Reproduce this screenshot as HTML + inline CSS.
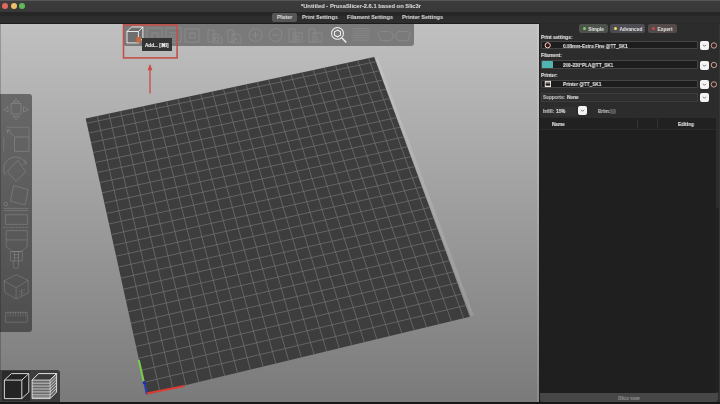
<!DOCTYPE html>
<html><head><meta charset="utf-8">
<style>
*{margin:0;padding:0;box-sizing:border-box}
html,body{width:720px;height:404px;overflow:hidden;background:#2b2b2b;font-family:"Liberation Sans",sans-serif}
.a{position:absolute}
#title{left:0;top:0;width:720px;height:12px;background:linear-gradient(#565656 0,#565656 1px,#3c3c3c 1px,#383838 12px)}
.tl{position:absolute;top:3.4px;width:5.8px;height:5.8px;border-radius:50%}
#ttxt{left:0.5px;top:3.4px;width:720px;text-align:center;font-size:5.8px;line-height:7px;font-weight:bold;color:#d4d4d4;white-space:nowrap;will-change:transform;-webkit-text-stroke:0.1px currentColor}
#tabs{left:0;top:12px;width:720px;height:12px;background:linear-gradient(#262626 0,#262626 4.5px,#2d2d2d 4.5px,#2d2d2d 10.8px,#2a2a2a 10.8px)}
.tab{position:absolute;top:1.4px;height:8.6px;font-size:6.1px;font-weight:bold;color:#d6d6d6;line-height:8.6px;white-space:nowrap;transform:scaleX(0.905);transform-origin:0 50%;will-change:transform;-webkit-text-stroke:0.1px currentColor}
#view{left:0;top:24px;width:539px;height:380px;background:linear-gradient(#c0c0c0,#7a7a7a 378px);overflow:hidden}
#panel{left:539px;top:24px;width:181px;height:380px;background:#2c2c2c}
.lbl{position:absolute;font-size:5.2px;font-weight:bold;color:#dcdcdc;white-space:nowrap;line-height:7px;transform:scaleX(0.9);transform-origin:0 50%;will-change:transform;-webkit-text-stroke:0.15px currentColor}
.combo{position:absolute;background:#1d1d1d;border:0.8px solid #454545;border-radius:1px}
.dd{position:absolute;width:9px;height:8.6px;background:#f4f4f4;border-radius:2px}
.dd svg{position:absolute;left:0;top:0}
.mode{position:absolute;top:24.3px;height:8.7px;border-radius:2.5px;font-size:4.8px;font-weight:bold;color:#d4d4d4;line-height:12.3px;white-space:nowrap;will-change:transform;-webkit-text-stroke:0.12px currentColor}
.mode i{position:absolute;top:2.9px;width:3px;height:3px;border-radius:50%}
</style></head><body>
<div class="a" id="title">
  <div class="tl" style="left:1.9px;background:#e3675f"></div>
  <div class="tl" style="left:10.8px;background:#ecc166"></div>
  <div class="tl" style="left:19.4px;background:#5dbb57"></div>
</div>
<div class="a" id="ttxt">*Untitled - PrusaSlicer-2.6.1 based on Slic3r</div>
<div class="a" id="tabs">
  <div class="a" style="left:272.2px;top:1.3px;width:24.6px;height:8.6px;background:#565656;border-radius:2px"></div>
  <div class="tab" style="left:277px">Plater</div>
  <div class="tab" style="left:301.6px">Print Settings</div>
  <div class="tab" style="left:346.5px">Filament Settings</div>
  <div class="tab" style="left:401.5px">Printer Settings</div>
</div>

<div class="a" style="left:0;top:22.7px;width:539px;height:1.4px;background:#1c1c1c"></div>
<div class="a" id="view">
<svg width="539" height="380" viewBox="0 24 539 380" style="position:absolute;left:0;top:0">
  <path d="M376.5 58.5L472.5 316" stroke="rgba(255,255,255,0.13)" stroke-width="3" fill="none"/>
  <polygon points="85.7,118.5 374.2,57.1 469.8,316.8 146.7,394.5" fill="#3d3d3d"/>
  <path d="M159.8 391.4L97.3 116.0M144.0 382.3L465.6 305.4M172.8 388.2L108.9 113.6M141.3 370.3L461.4 294.1M185.8 385.1L120.5 111.1M138.7 358.3L457.3 282.9M198.7 382.0L132.0 108.6M136.1 346.5L453.2 271.8M211.7 378.9L143.5 106.2M133.5 334.8L449.2 260.8M224.6 375.8L155.0 103.7M131.0 323.3L445.2 250.0M237.4 372.7L166.5 101.3M128.4 311.8L441.2 239.2M250.3 369.6L177.9 98.9M125.9 300.5L437.3 228.5M263.1 366.5L189.4 96.4M123.4 289.2L433.4 218.0M275.8 363.4L200.8 94.0M121.0 278.1L429.6 207.5M288.6 360.4L212.1 91.6M118.5 267.1L425.7 197.1M301.3 357.3L223.5 89.2M116.1 256.2L422.0 186.9M314.0 354.3L234.8 86.8M113.7 245.4L418.2 176.7M326.6 351.2L246.1 84.4M111.4 234.6L414.5 166.6M339.2 348.2L257.3 82.0M109.0 224.0L410.8 156.6M351.8 345.2L268.6 79.6M106.7 213.5L407.2 146.7M364.3 342.2L279.8 77.2M104.4 203.1L403.6 136.9M376.9 339.1L291.0 74.8M102.1 192.8L400.0 127.2M389.4 336.1L302.2 72.4M99.9 182.6L396.5 117.6M401.8 333.1L313.3 70.1M97.6 172.5L393.0 108.1M414.2 330.2L324.4 67.7M95.4 162.5L389.5 98.6M426.6 327.2L335.5 65.3M93.2 152.5L386.0 89.2M439.0 324.2L346.6 63.0M91.1 142.7L382.6 80.0M451.3 321.2L357.7 60.6M88.9 133.0L379.2 70.8M463.7 318.3L368.7 58.3M86.8 123.3L375.9 61.6" stroke="#727272" stroke-width="0.72" fill="none"/>
  <line x1="143.9" y1="382.4" x2="138.8" y2="360" stroke="#74d048" stroke-width="2"/>
  <line x1="144.6" y1="382.8" x2="146.6" y2="394" stroke="#2a3cb8" stroke-width="2"/>
  <line x1="146.6" y1="393.4" x2="184.4" y2="385.9" stroke="#dc3c32" stroke-width="2"/>
  <circle cx="144.3" cy="382.8" r="1.7" fill="#1e30a8"/>
</svg>
</div>

<!-- top toolbar -->
<div class="a" style="left:123px;top:24px;width:291.4px;height:21.6px;background:#7a7a7a;border-radius:0 0 3px 3px"></div>
<svg class="a" style="left:0;top:0" width="720" height="404">
  <g fill="none" stroke="#8f8f8f" stroke-width="0.75">
    <!-- delete -->
    <rect x="147" y="28" width="15" height="14"/>
    <rect x="152" y="33" width="6" height="6"/>
    <!-- delete all -->
    <rect x="166" y="28" width="15" height="14"/>
    <path d="M169 33h9M169 36h9M169 39h9"/>
    <!-- arrange -->
    <rect x="185" y="29" width="14" height="13"/>
    <rect x="190" y="33" width="5" height="5"/>
    <!-- copy -->
    <path d="M208 30h6v12h-6z"/><path d="M213 34h5l4 4v5h-9z"/><circle cx="217" cy="39" r="2"/>
    <!-- paste -->
    <path d="M228 30h6v12h-6z"/><path d="M232 34h6l3 3v6h-9z"/><path d="M234 41l2-3 2 3"/>
    <!-- more -->
    <circle cx="255.5" cy="35" r="6.5"/><path d="M252 35h7M255.5 31.5v7"/>
    <!-- fewer -->
    <circle cx="275.5" cy="35" r="6.5"/><path d="M272 35h7"/>
    <!-- split objects -->
    <path d="M289 29h6v13h-6z"/><path d="M293 33h9v9h-9z"/><rect x="296" y="36" width="3" height="4"/>
    <!-- split parts -->
    <path d="M309 29h6v13h-6z"/><path d="M313 33h9v9h-9z"/><path d="M317 36v4h2"/>
    <!-- layers -->
    <path d="M352.5 28.6h17M352.5 30.9h17M352.5 33.2h17M352.5 35.5h17M352.5 37.8h17M352.5 40.1h17" stroke="#8c8c8c"/>
    <!-- undo -->
    <path d="M377.5 31.8l3.5 9h7.5a4.6 4.6 0 0 0 0-9.2h-8.5"/>
    <!-- redo -->
    <path d="M410.5 31.3l-2.5 9.5h-7.5a4.7 4.7 0 0 1 0-9.4h8"/>
  </g>
  <!-- search (active) -->
  <g fill="none" stroke="#f0f0f0" stroke-width="1.05">
    <circle cx="337.5" cy="33.4" r="5.9"/>
    <path d="M337.5 30l3 1.7v3.4l-3 1.7-3-1.7v-3.4z"/>
    <path d="M342 38.1l4.3 4.5" stroke-width="1.4"/>
  </g>
  <!-- add cube -->
  <g stroke="#f4f4f4" stroke-width="0.9" stroke-linejoin="round">
    <path d="M127 31.5l4.5-4.5h11.4v11.4l-4.5 4.5H127z" fill="#6e6e6e"/>
    <path d="M127 31.5h11.4v11.4M138.4 31.5l4.5-4.5" fill="none"/>
  </g>
  <rect x="136.3" y="37" width="4.6" height="5.6" fill="#c8683a"/>
  <!-- red frame -->
  <rect x="123.5" y="24.9" width="53.6" height="33" fill="none" stroke="#c4504a" stroke-width="1.6"/>
  <!-- arrow -->
  <path d="M150 69v24.4" stroke="#cc4a40" stroke-width="1.3"/>
  <path d="M147.6 70.2L150 63.8 152.4 70.2z" fill="#cc4a40"/>
</svg>
<div class="a" style="left:142.3px;top:38.4px;width:29.6px;height:13.4px;background:#343434;font-size:4.7px;font-weight:bold;color:#ededed;line-height:16.2px;padding-left:2.9px;white-space:nowrap;overflow:hidden;will-change:transform;-webkit-text-stroke:0.1px #eee">Add... [&#8984;I]</div>

<!-- left toolbar -->
<div class="a" style="left:0;top:93.6px;width:32.2px;height:238.4px;background:rgba(0,0,0,0.42);border-radius:0 3px 3px 0"></div>
<svg class="a" style="left:0;top:0" width="60" height="404">
  <g fill="none" stroke="rgba(255,255,255,0.2)" stroke-width="0.75" stroke-linejoin="round">
    <!-- move -->
    <rect x="11.1" y="103.5" width="9.9" height="10.5"/>
    <path d="M13 101.9l3.1-3 3.1 3zM13 116.3l3.1 3.4 3.1-3.4zM8 106.6l-4.2 2.8 4.2 2.7zM23.5 106.6l5.2 2.8-5.2 2.7z"/>
    <!-- scale -->
    <path d="M3.8 137v14.4M6.5 127.3h22.5v9.7" stroke="rgba(255,255,255,0.15)"/>
    <rect x="14.5" y="137" width="14.5" height="14.4"/>
    <path d="M7.5 130l6 6M7.5 130h3.5M7.5 130v3.5"/>
    <!-- rotate -->
    <path d="M5.5 175a11 11 0 0 1 20-12.5"/><path d="M24.5 159.5l2.2 4 -4 0.8"/>
    <path d="M17.7 160.3l8.1 11.3-9.7 9.7-8.8-9.7z"/>
    <!-- place on face -->
    <path d="M13.7 185.6l14.5 4.1-3.2 15.3-14.5-4z"/>
    <circle cx="5.8" cy="204.2" r="1.8"/>
    <path d="M4 208.4h24.2M4 210.6h24.2"/>
    <!-- cut -->
    <rect x="5.6" y="214.7" width="21.8" height="9.7"/>
    <path d="M3.2 227.5h25.8" stroke-dasharray="2.2 1"/>
    <!-- paint -->
    <path d="M6.2 230.6h21v16.1l-6.2 4.9h-8.6l-6.2-4.9z M6.2 239.9h21"/>
    <rect x="10.5" y="251.6" width="11.8" height="9.3"/>
    <path d="M13.5 254.7h6M13.5 257.8h6M14.5 251.6v9.3M18.5 251.6v9.3"/>
    <path d="M13.3 260.9v5a2.6 2.6 0 0 0 5.3 0v-5"/>
    <!-- measure cube -->
    <path d="M4 281l12.1-6.3 12.1 5.6v12.9l-12.1 5.7-11.3-6.5z M4 281l12.1 6.6 12.1-7.3 M16.1 287.6v11.3"/>
    <path d="M19 292l6-3M19 295l6-3M21.5 289v7" stroke-width="0.5"/>
    <!-- ruler -->
    <rect x="5.6" y="312.3" width="21.6" height="9.9"/>
    <path d="M8 312.3v4.2M10.5 312.3v4.2M13 312.3v4.2M15.5 312.3v4.2M18 312.3v4.2M20.5 312.3v4.2M23 312.3v4.2M25.5 312.3v4.2" stroke-width="0.6"/>
  </g>
</svg>

<div class="a" style="left:0;top:24px;width:1.1px;height:380px;background:rgba(0,0,0,0.2)"></div>
<!-- bottom-left view toolbar -->
<div class="a" style="left:0;top:369.8px;width:60px;height:34.2px;background:#3d3d3d;border-radius:0 3px 0 0"></div>
<div class="a" style="left:2.2px;top:370.9px;width:28.3px;height:30.4px;background:#2b2b2b"></div>
<svg class="a" style="left:0;top:0" width="60" height="404">
  <g stroke="#e8e8e8" stroke-width="0.9" stroke-linejoin="round">
    <path d="M4.4 380.1l7-6.5h17.4v18.5l-7 6.5H4.4z" fill="#242424"/>
    <path d="M4.4 380.1h17.4v18.5M21.8 380.1l7-6.5" fill="none"/>
    <path d="M32.1 380.1l6.5-6.5h18v18.5l-6.5 6.5h-18z" fill="#6a6a6a"/>
    <path d="M38.6 373.6h18l-6.5 6.5h-18z" fill="#3a3a3a"/>
    <path d="M32.1 383.2h18M32.1 386.1h18M32.1 389h18M32.1 391.9h18M32.1 394.8h18M32.1 397.2h18M50.1 380.1v18.5M50.1 380.1l6.5-6.5 M50.1 383.2l6.5-6.5M50.1 386.1l6.5-6.5M50.1 389l6.5-6.5M50.1 391.9l6.5-6.5M50.1 394.8l6.5-6.5" fill="none" stroke-width="0.7"/>
  </g>
</svg>

<!-- right panel -->
<div class="a" id="panel"></div>
<div class="a" style="left:713.5px;top:208px;width:5px;height:184px;background:#222"></div>
<div class="a" style="left:718.7px;top:24px;width:1.3px;height:378px;background:#353535"></div>
<div class="a" style="left:538.7px;top:24px;width:1.3px;height:380px;background:#1f1f1f"></div>
<div class="a" style="left:536.6px;top:24px;width:2.1px;height:378px;background:rgba(255,255,255,0.12)"></div>
<div class="mode" style="left:578.8px;width:29px;background:#4b534a;padding-left:9.2px">Simple<i style="left:4.2px;background:#86c868"></i></div>
<div class="mode" style="left:610.4px;width:35.2px;background:#4c4c52;padding-left:9.4px">Advanced<i style="left:4.2px;background:#e8e060"></i></div>
<div class="mode" style="left:648.3px;width:29.1px;background:#544a4a;padding-left:9.6px">Expert<i style="left:4.2px;background:#d04444"></i></div>

<div class="lbl" style="left:541px;top:33.5px">Print settings:</div>
<div class="combo" style="left:540.7px;top:40.6px;width:157.5px;height:8.7px"></div>
<div class="lbl" style="left:562.8px;top:42.8px">0.08mm-Extra Fine @TT_SK1</div>
<svg class="a" style="left:0;top:0" width="720" height="130">
  <circle cx="547.7" cy="45.3" r="2.6" fill="#3a1614" stroke="#f0d4cc" stroke-width="1"/>
  <circle cx="713.9" cy="45.5" r="2.7" fill="#3a2622" stroke="#ccb0a6" stroke-width="0.9"/>
  <circle cx="713.9" cy="65" r="2.7" fill="#3a2622" stroke="#ccb0a6" stroke-width="0.9"/>
  <circle cx="713.9" cy="84.4" r="2.7" fill="#3a2622" stroke="#ccb0a6" stroke-width="0.9"/>
</svg>
<div class="dd" style="left:699.6px;top:41.1px"><svg width="9" height="9"><path d="M3 3.8l1.5 1.5 1.5-1.5" fill="none" stroke="#555" stroke-width="0.8"/></svg></div>

<div class="lbl" style="left:541px;top:52.1px">Filament:</div>
<div class="combo" style="left:540.7px;top:60.4px;width:157.5px;height:8.7px"></div>
<div class="a" style="left:542.4px;top:60.9px;width:10.9px;height:7.4px;background:#52b4b2;border-radius:0.5px"></div>
<div class="lbl" style="left:562.8px;top:61.9px">200-230°PLA@TT_SK1</div>
<div class="dd" style="left:699.6px;top:61px"><svg width="9" height="9"><path d="M3 3.8l1.5 1.5 1.5-1.5" fill="none" stroke="#555" stroke-width="0.8"/></svg></div>

<div class="lbl" style="left:541px;top:72.0px">Printer:</div>
<div class="combo" style="left:540.7px;top:79.8px;width:157.5px;height:8.7px"></div>
<svg class="a" style="left:0;top:0" width="560" height="92"><rect x="544.8" y="80.9" width="6.2" height="6.2" fill="#ece6dc"/><rect x="545.7" y="81.8" width="4.4" height="1.6" fill="#8e867c"/><rect x="545.7" y="83.4" width="4.4" height="2.2" fill="#161616"/></svg>
<div class="lbl" style="left:562.8px;top:81.3px">Printer @TT_SK1</div>
<div class="dd" style="left:699.6px;top:80.3px"><svg width="9" height="9"><path d="M3 3.8l1.5 1.5 1.5-1.5" fill="none" stroke="#555" stroke-width="0.8"/></svg></div>

<div class="a" style="left:540.7px;top:92.6px;width:157.1px;height:9.2px;background:#2f2f2f;border:0.8px solid #3c3c3c"></div>
<div class="lbl" style="left:543px;top:94.3px;color:#bdbdbd">Supports:</div>
<div class="lbl" style="left:566.9px;top:94.3px">None</div>
<div class="dd" style="left:699.9px;top:93.3px"><svg width="9" height="9"><path d="M3 3.8l1.5 1.5 1.5-1.5" fill="none" stroke="#555" stroke-width="0.8"/></svg></div>

<div class="lbl" style="left:543px;top:108.1px;color:#bdbdbd">Infill:</div>
<div class="a" style="left:553.8px;top:106.9px;width:22.5px;height:8.7px;background:#323232"></div>
<div class="lbl" style="left:555.6px;top:108.1px">15%</div>
<div class="dd" style="left:578px;top:106.2px"><svg width="9" height="9"><path d="M3 3.8l1.5 1.5 1.5-1.5" fill="none" stroke="#555" stroke-width="0.8"/></svg></div>
<div class="lbl" style="left:597.5px;top:108.1px;color:#bdbdbd">Brim:</div>
<div class="a" style="left:610px;top:108.8px;width:5.6px;height:5px;background:#555;border-radius:1px"></div>

<div class="a" style="left:540px;top:117.6px;width:176px;height:11.4px;background:#212121"></div>
<div class="a" style="left:540px;top:129px;width:176px;height:0.8px;background:#2b2b2b"></div>
<div class="a" style="left:540px;top:129.8px;width:176px;height:263px;background:#1f1f1f"></div>
<div class="a" style="left:636.5px;top:119px;width:0.6px;height:9px;background:#333"></div>
<div class="a" style="left:657.3px;top:119px;width:0.6px;height:9px;background:#333"></div>
<div class="lbl" style="left:551.9px;top:120.9px">Name</div>
<div class="lbl" style="left:678.3px;top:120.9px">Editing</div>


<div class="a" style="left:540px;top:392.8px;width:177.5px;height:8.8px;background:#474747;border-radius:0 0 3px 3px"></div>
<div class="lbl" style="left:618px;top:394.7px;color:#8a8a8a">Slice now</div>
<div class="a" style="left:0;top:402px;width:720px;height:2px;background:#161616"></div>
</body></html>
